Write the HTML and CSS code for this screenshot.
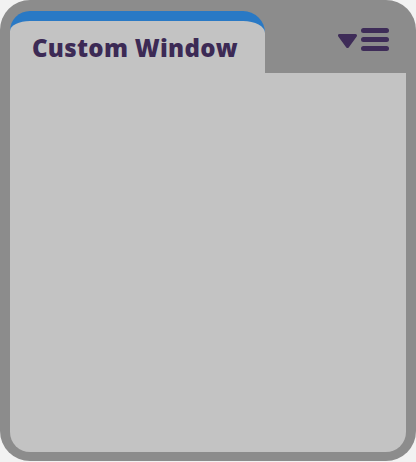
FILE: index.html
```html
<!DOCTYPE html>
<html lang="en">
<head>
  <meta charset="UTF-8">
  <title>Custom Window</title>
  <link rel="stylesheet" href="styles.css">
</head>
<body>
  <div class="window">
    <div class="window-header">
      <div class="tab">
        <h2>Custom Window</h2>
      </div>
      <div class="header-tools">
        <svg class="menu-icon" width="51" height="24" viewBox="0 0 51 24">
          <polygon points="1.5,7.5 17.5,7.5 9.5,18.5" fill="#3e2c58" stroke="#3e2c58" stroke-width="3" stroke-linejoin="round"/>
          <g stroke="#3e2c58" stroke-width="5" stroke-linecap="round">
            <line x1="25.5" y1="2.5" x2="48.5" y2="2.5"/>
            <line x1="25.5" y1="11.5" x2="48.5" y2="11.5"/>
            <line x1="25.5" y1="20.5" x2="48.5" y2="20.5"/>
          </g>
        </svg>
      </div>
    </div>
    <div class="window-body"></div>
  </div>
</body>
</html>
```

FILE: styles.css
```css
body {
  font-family: 'Open Sans', sans-serif;
  background-color: #f2f2f2;
  margin: 0;
  padding: 0;
}

.window {
  width: 416px;
  height: 461px;
  box-sizing: border-box;
  padding: 11px 10px 9px;
  background-color: #8c8c8c;
  border-radius: 30px;
  display: flex;
  flex-direction: column;
}

.window-header {
  display: flex;
  height: 62px;
}

.tab {
  width: 255px;
  box-sizing: border-box;
  background-color: #c3c3c3;
  border-top: 10px solid #2979c5;
  border-radius: 20px 22px 0 0;
  padding-left: 22px;
}

.tab h2 {
  margin: 0;
  padding-top: 12px;
  font-size: 24px;
  line-height: 30px;
  font-weight: 800;
  letter-spacing: 0.3px;
  color: #3c2a55;
}

.header-tools {
  flex: 1;
  display: flex;
  justify-content: flex-end;
  align-items: flex-start;
  padding: 17px 17px 0 0;
}

.menu-icon {
  display: block;
}

.window-body {
  flex: 1;
  background-color: #c3c3c3;
  border-radius: 0 0 20px 20px;
}
```
